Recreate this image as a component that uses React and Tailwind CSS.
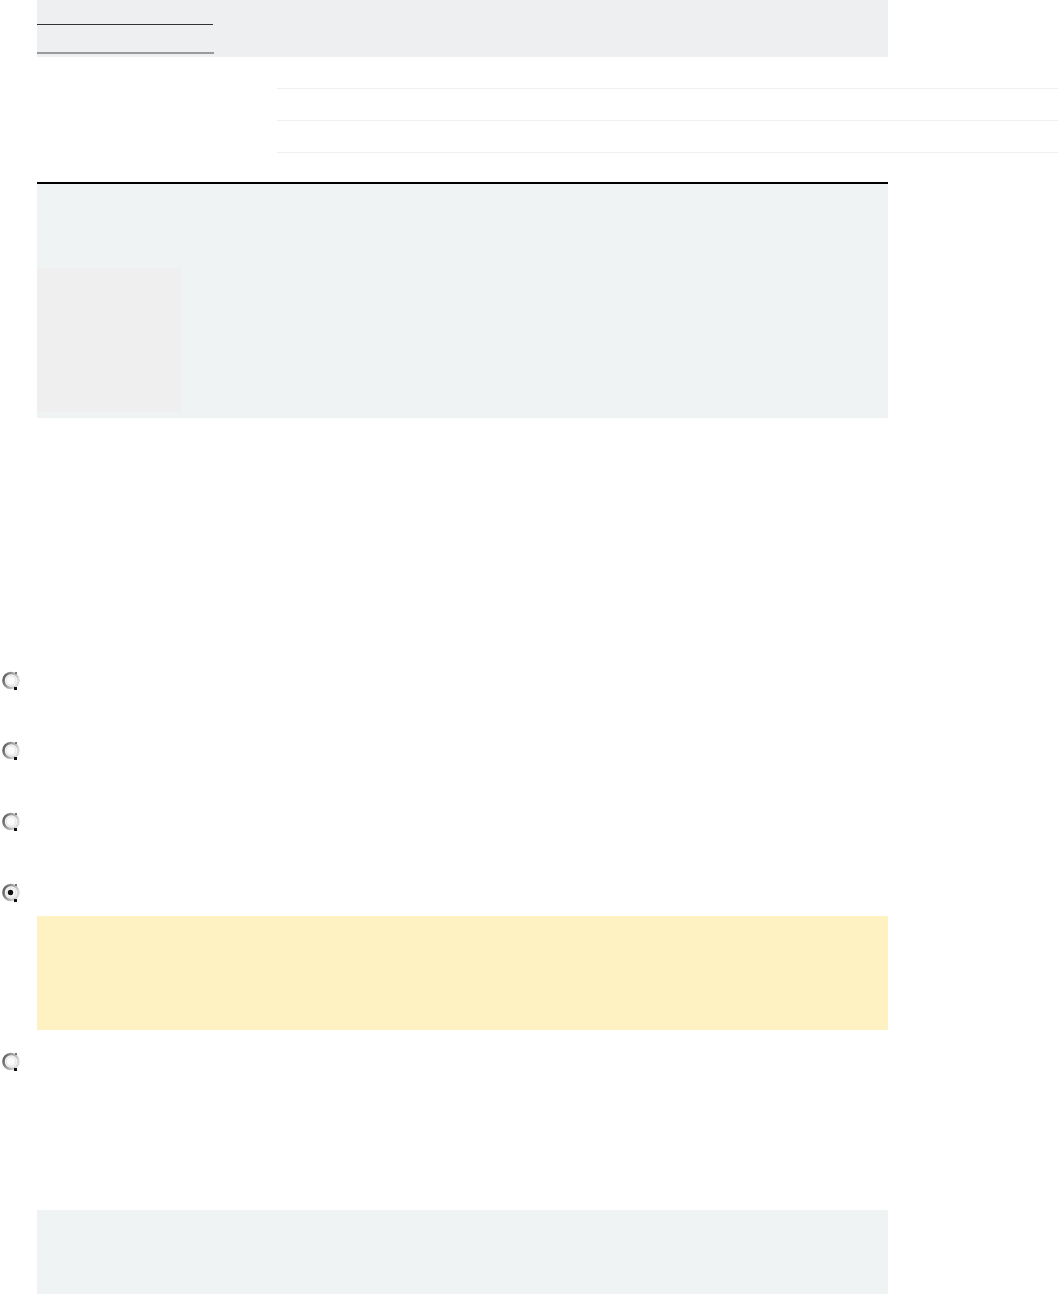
import React from "react";

function Radio({ checked }) {
	return (
		<svg width="22" height="22" viewBox="0 0 22 22" className="block">
			<defs>
				<linearGradient id={checked ? "rgc" : "rgu"} x1="0" y1="0" x2="1" y2="0.4">
					<stop offset="0" stopColor="#4f4f4f" />
					<stop offset="0.5" stopColor="#9d9d9d" />
					<stop offset="1" stopColor="#dcdcdc" />
				</linearGradient>
			</defs>
			<circle cx="11" cy="10.5" r="7.5" fill="#fbfbfb" stroke={checked ? "url(#rgc)" : "url(#rgu)"} strokeWidth="2.6" />
			<circle cx="11" cy="10.5" r="4.8" fill="none" stroke="#e8e8e8" strokeWidth="1.4" />
			{checked && <circle cx="10.5" cy="10.5" r="2.7" fill="#111" />}
			<rect x="14" y="17" width="3" height="3" fill="#111" />
			<rect x="15" y="2" width="2" height="2" fill="#7a7a7a" />
		</svg>
	);
}

function RadioRow({ checked, className }) {
	return (
		<div className={"h-[22px] " + (className || "")}>
			<Radio checked={checked} />
		</div>
	);
}

export default function App() {
	return (
		<div className="w-full h-[1294px] overflow-hidden bg-white" style={{ fontFamily: "'Liberation Sans', Arial, sans-serif" }}>
			{/* header strip */}
			<div className="ml-[37px] w-[851px] h-[57px] bg-[#eeeff1] pt-[24px]">
				<div className="w-[176px] h-px bg-[#333333]" />
				<div className="w-[177px] h-[2px] bg-[#9a9a9a] mt-[27px]" />
			</div>

			{/* rule lines */}
			<div className="ml-[277px] mt-[31px]">
				<div className="h-[32px] border-t border-[#efefef]" />
				<div className="h-[32px] border-t border-[#efefef]" />
				<div className="h-px bg-[#efefef]" />
			</div>

			{/* panel */}
			<div className="ml-[37px] w-[851px] mt-[29px] border-t-2 border-black bg-[#eff3f3] h-[236px] pt-[84px]">
				<div className="w-[144px] h-[144px] bg-[#efefef]" />
			</div>

			{/* options */}
			<div className="mt-[252px] flex flex-col">
				<RadioRow />
				<RadioRow className="mt-[48px]" />
				<RadioRow className="mt-[49px]" />
				<RadioRow checked className="mt-[49px]" />
				<div className="ml-[37px] w-[851px] h-[114px] bg-[#fff2c2] mt-[12px]" />
				<RadioRow className="mt-[21px]" />
			</div>

			{/* footer panel */}
			<div className="ml-[37px] w-[851px] h-[120px] bg-[#eff3f3] mt-[137px]" />
		</div>
	);
}
